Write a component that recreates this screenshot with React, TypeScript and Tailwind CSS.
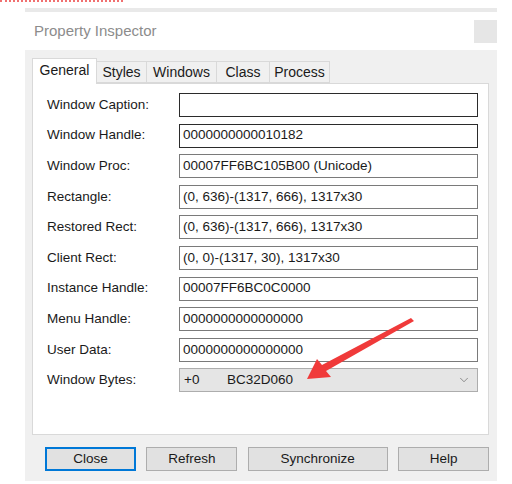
import { ChevronDown } from "lucide-react";

const rows = [
  { label: "Window Caption:", value: "", dark: true },
  { label: "Window Handle:", value: "0000000000010182", dark: true },
  { label: "Window Proc:", value: "00007FF6BC105B00 (Unicode)" },
  { label: "Rectangle:", value: "(0, 636)-(1317, 666), 1317x30" },
  { label: "Restored Rect:", value: "(0, 636)-(1317, 666), 1317x30" },
  { label: "Client Rect:", value: "(0, 0)-(1317, 30), 1317x30" },
  { label: "Instance Handle:", value: "00007FF6BC0C0000" },
  { label: "Menu Handle:", value: "0000000000000000" },
  { label: "User Data:", value: "0000000000000000" },
];

const tabs = ["Styles", "Windows", "Class", "Process"];

const App = () => {
  return (
    <div
      className="relative w-[512px] h-[484px] bg-white overflow-hidden text-[13.5px] text-[#1a1a1a]"
      style={{ fontFamily: '"Liberation Sans", Arial, sans-serif' }}
    >
      {/* dotted guide line at the very top */}
      <div className="absolute left-0 top-0 w-[123px] border-t-2 border-dotted border-[#f07070]" />

      <div className="ml-[25px] pt-[8px] w-[472px]">
        <div className="h-[4px] bg-[#e9e9e9]" />
        <div className="h-[38px] bg-white flex items-center justify-between pl-[9px]">
          <span className="text-[15px] text-[#8c8c8c]">Property Inspector</span>
          <div className="w-[23px] h-[23px] bg-[#e6e6e6]" />
        </div>

        <div className="bg-[#f0f0f0] h-[431px] pl-[7px] pr-[8px] pt-[9px]">
          {/* tabs */}
          <div className="flex items-end h-[24px] text-[14px]">
            <div className="h-[26px] w-[65px] bg-white border border-b-0 border-[#d9d9d9] flex items-center justify-center relative z-10 -mb-[1px] pb-[2px]">
              General
            </div>
            {tabs.map((t) => (
              <div
                key={t}
                className={`h-[22px] border border-l-0 border-[#d9d9d9] bg-[#f0f0f0] flex items-center justify-center ${
                  t === "Styles" ? "w-[50px]" : t === "Windows" ? "w-[70px]" : t === "Class" ? "w-[53px]" : "w-[60px]"
                }`}
              >
                {t}
              </div>
            ))}
          </div>

          {/* panel */}
          <div className="bg-white border border-[#d9d9d9] h-[352px] pl-[14px] pr-[10px] pt-[9px] flex flex-col gap-[6.6px]">
            {rows.map((r) => (
              <div key={r.label} className="flex items-center h-[24px]">
                <span className="w-[132px] shrink-0">{r.label}</span>
                <div
                  className={`flex-1 h-[24px] border flex items-center px-[3px] ${
                    r.dark ? "border-[#2b2b2b]" : "border-[#7a7a7a]"
                  }`}
                >
                  {r.value}
                </div>
              </div>
            ))}
            <div className="flex items-center h-[24px]">
              <span className="w-[132px] shrink-0">Window Bytes:</span>
              <div className="flex-1 h-[24px] border border-[#adadad] bg-[#e5e5e5] flex items-center pl-[4px] pr-[6px]">
                <span className="w-[43px]">+0</span>
                <span className="flex-1">BC32D060</span>
                <ChevronDown size={14} strokeWidth={1.2} className="text-[#666]" />
              </div>
            </div>
          </div>

          {/* buttons */}
          <div className="flex mt-[12px] pl-[13px] gap-[10.5px]">
            <button className="w-[91px] h-[24px] bg-[#e1e1e1] border-2 border-[#0078d7]">Close</button>
            <button className="w-[91px] h-[24px] bg-[#e1e1e1] border border-[#adadad]">Refresh</button>
            <button className="w-[140px] h-[24px] bg-[#e1e1e1] border border-[#adadad]">Synchronize</button>
            <button className="w-[91px] h-[24px] bg-[#e1e1e1] border border-[#adadad]">Help</button>
          </div>
        </div>
      </div>

      {/* red annotation arrow */}
      <svg className="absolute left-0 top-0" width="512" height="484" viewBox="0 0 512 484">
        <polygon
          points="411,318 322,365 317,359 307,379 331,377 326,371 414,321"
          fill="#f03a3a"
        />
      </svg>
    </div>
  );
};

export default App;
